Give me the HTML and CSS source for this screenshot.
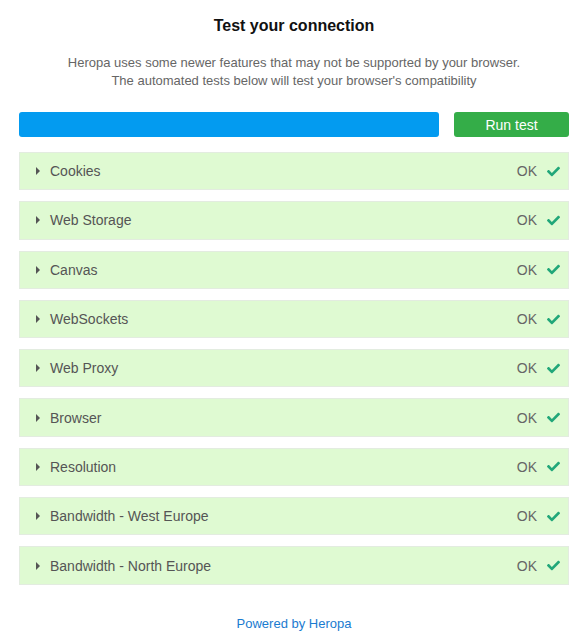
FILE: index.html
```html
<!DOCTYPE html>
<html lang="en">
<head>
    <meta charset="UTF-8">
    <title>Test your connection - Heropa</title>
    <link rel="stylesheet" href="styles.css">
</head>
<body>
    <div class="container">
        <h1>Test your connection</h1>
        <p class="subtitle">Heropa uses some newer features that may not be supported by your browser.<br>The automated tests below will test your browser's compatibility</p>

        <div class="toolbar">
            <div class="progress"><div class="progress-fill"></div></div>
            <button class="btn">Run test</button>
        </div>

        <div class="tests">
            <div class="test"><span class="caret"></span><span class="name">Cookies</span><span class="status">OK</span><svg class="check" viewBox="0 0 512 512"><path d="M173.9 439.4l-166.4-166.4c-10-10-10-26.2 0-36.2l36.2-36.2c10-10 26.2-10 36.2 0L192 312.7 432.1 72.6c10-10 26.2-10 36.2 0l36.2 36.2c10 10 10 26.2 0 36.2l-294.4 294.4c-10 10-26.2 10-36.2 0z"/></svg></div>
            <div class="test"><span class="caret"></span><span class="name">Web Storage</span><span class="status">OK</span><svg class="check" viewBox="0 0 512 512"><path d="M173.9 439.4l-166.4-166.4c-10-10-10-26.2 0-36.2l36.2-36.2c10-10 26.2-10 36.2 0L192 312.7 432.1 72.6c10-10 26.2-10 36.2 0l36.2 36.2c10 10 10 26.2 0 36.2l-294.4 294.4c-10 10-26.2 10-36.2 0z"/></svg></div>
            <div class="test"><span class="caret"></span><span class="name">Canvas</span><span class="status">OK</span><svg class="check" viewBox="0 0 512 512"><path d="M173.9 439.4l-166.4-166.4c-10-10-10-26.2 0-36.2l36.2-36.2c10-10 26.2-10 36.2 0L192 312.7 432.1 72.6c10-10 26.2-10 36.2 0l36.2 36.2c10 10 10 26.2 0 36.2l-294.4 294.4c-10 10-26.2 10-36.2 0z"/></svg></div>
            <div class="test"><span class="caret"></span><span class="name">WebSockets</span><span class="status">OK</span><svg class="check" viewBox="0 0 512 512"><path d="M173.9 439.4l-166.4-166.4c-10-10-10-26.2 0-36.2l36.2-36.2c10-10 26.2-10 36.2 0L192 312.7 432.1 72.6c10-10 26.2-10 36.2 0l36.2 36.2c10 10 10 26.2 0 36.2l-294.4 294.4c-10 10-26.2 10-36.2 0z"/></svg></div>
            <div class="test"><span class="caret"></span><span class="name">Web Proxy</span><span class="status">OK</span><svg class="check" viewBox="0 0 512 512"><path d="M173.9 439.4l-166.4-166.4c-10-10-10-26.2 0-36.2l36.2-36.2c10-10 26.2-10 36.2 0L192 312.7 432.1 72.6c10-10 26.2-10 36.2 0l36.2 36.2c10 10 10 26.2 0 36.2l-294.4 294.4c-10 10-26.2 10-36.2 0z"/></svg></div>
            <div class="test"><span class="caret"></span><span class="name">Browser</span><span class="status">OK</span><svg class="check" viewBox="0 0 512 512"><path d="M173.9 439.4l-166.4-166.4c-10-10-10-26.2 0-36.2l36.2-36.2c10-10 26.2-10 36.2 0L192 312.7 432.1 72.6c10-10 26.2-10 36.2 0l36.2 36.2c10 10 10 26.2 0 36.2l-294.4 294.4c-10 10-26.2 10-36.2 0z"/></svg></div>
            <div class="test"><span class="caret"></span><span class="name">Resolution</span><span class="status">OK</span><svg class="check" viewBox="0 0 512 512"><path d="M173.9 439.4l-166.4-166.4c-10-10-10-26.2 0-36.2l36.2-36.2c10-10 26.2-10 36.2 0L192 312.7 432.1 72.6c10-10 26.2-10 36.2 0l36.2 36.2c10 10 10 26.2 0 36.2l-294.4 294.4c-10 10-26.2 10-36.2 0z"/></svg></div>
            <div class="test"><span class="caret"></span><span class="name">Bandwidth - West Europe</span><span class="status">OK</span><svg class="check" viewBox="0 0 512 512"><path d="M173.9 439.4l-166.4-166.4c-10-10-10-26.2 0-36.2l36.2-36.2c10-10 26.2-10 36.2 0L192 312.7 432.1 72.6c10-10 26.2-10 36.2 0l36.2 36.2c10 10 10 26.2 0 36.2l-294.4 294.4c-10 10-26.2 10-36.2 0z"/></svg></div>
            <div class="test"><span class="caret"></span><span class="name">Bandwidth - North Europe</span><span class="status">OK</span><svg class="check" viewBox="0 0 512 512"><path d="M173.9 439.4l-166.4-166.4c-10-10-10-26.2 0-36.2l36.2-36.2c10-10 26.2-10 36.2 0L192 312.7 432.1 72.6c10-10 26.2-10 36.2 0l36.2 36.2c10 10 10 26.2 0 36.2l-294.4 294.4c-10 10-26.2 10-36.2 0z"/></svg></div>
        </div>

        <div class="footer"><a href="#">Powered by Heropa</a></div>
    </div>
</body>
</html>
```

FILE: styles.css
```css
body {
    margin: 0;
    font-family: "Liberation Sans", Arial, sans-serif;
    background: white;
    color: #555;
}
.container {
    padding: 0 19px;
}
h1 {
    margin: 0;
    padding-top: 16px;
    font-size: 16px;
    line-height: 19px;
    font-weight: bold;
    color: #111;
    text-align: center;
}
.subtitle {
    margin: 19px 0 0;
    font-size: 13px;
    line-height: 18px;
    color: #666;
    text-align: center;
}
.toolbar {
    display: flex;
    gap: 15px;
    margin-top: 22px;
}
.progress {
    flex: 1;
    height: 25px;
    border-radius: 3px;
    background: #0299ef;
    overflow: hidden;
}
.progress-fill {
    height: 100%;
    width: 100%;
    background: #039bf0;
}
.btn {
    width: 115px;
    height: 25px;
    border: none;
    border-radius: 3px;
    background: #34ad48;
    color: white;
    font-family: inherit;
    font-size: 14px;
    padding: 0;
}
.tests {
    margin-top: 15px;
}
.test {
    display: flex;
    align-items: center;
    height: 38.3px;
    box-sizing: border-box;
    margin-bottom: 11px;
    padding: 0 8px 0 16px;
    background: #dffad2;
    border: 1px solid #e3ece0;
    font-size: 14px;
}
.caret {
    width: 0;
    height: 0;
    border-top: 4px solid transparent;
    border-bottom: 4px solid transparent;
    border-left: 4px solid #555;
    margin-right: 10px;
}
.name {
    flex: 1;
    color: #555;
}
.status {
    color: #666;
    margin-right: 10px;
}
.check {
    width: 13px;
    height: 13px;
    fill: #21a779;
}
.footer {
    text-align: center;
    margin-top: 31px;
    font-size: 13px;
}
.footer a {
    color: #1a7bd0;
    text-decoration: none;
}
```
